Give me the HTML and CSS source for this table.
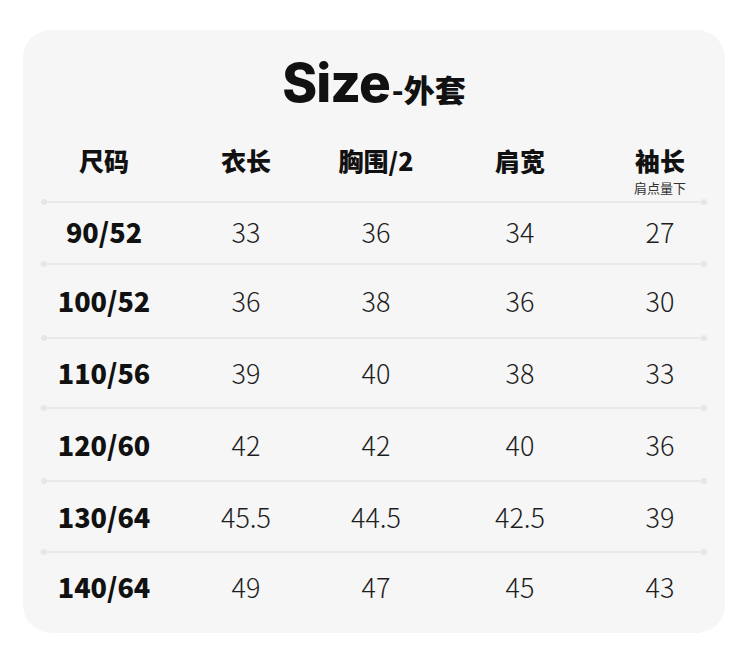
FILE: index.html
```html
<!DOCTYPE html>
<html lang="zh">
<head>
<meta charset="utf-8">
<link rel="stylesheet" href="styles.css">
</head>
<body>
<div class="card">
  <h1 class="title"><span class="title-en">Size</span><span class="title-zh">-外套</span></h1>
  <div class="grid head">
    <div class="cell">尺码</div>
    <div class="cell">衣长</div>
    <div class="cell">胸围/2</div>
    <div class="cell">肩宽</div>
    <div class="cell">袖长<span class="sub">肩点量下</span></div>
  </div>
  <div class="rule"></div>
  <div class="grid row r1"><div class="cell size">90/52</div><div class="cell">33</div><div class="cell">36</div><div class="cell">34</div><div class="cell">27</div></div>
  <div class="rule"></div>
  <div class="grid row r2"><div class="cell size">100/52</div><div class="cell">36</div><div class="cell">38</div><div class="cell">36</div><div class="cell">30</div></div>
  <div class="rule"></div>
  <div class="grid row r3"><div class="cell size">110/56</div><div class="cell">39</div><div class="cell">40</div><div class="cell">38</div><div class="cell">33</div></div>
  <div class="rule"></div>
  <div class="grid row r4"><div class="cell size">120/60</div><div class="cell">42</div><div class="cell">42</div><div class="cell">40</div><div class="cell">36</div></div>
  <div class="rule"></div>
  <div class="grid row r5"><div class="cell size">130/64</div><div class="cell">45.5</div><div class="cell">44.5</div><div class="cell">42.5</div><div class="cell">39</div></div>
  <div class="rule"></div>
  <div class="grid row r6"><div class="cell size">140/64</div><div class="cell">49</div><div class="cell">47</div><div class="cell">45</div><div class="cell">43</div></div>
</div>
</body>
</html>
```
FILE: styles.css
```css
html, body {
  margin: 0;
  padding: 0;
  background: #ffffff;
}
body {
  padding: 30px 0 0 23px;
  font-family: "Noto Sans CJK SC", "Noto Sans", sans-serif;
  color: #1a1a1a;
}
.card {
  width: 702px;
  height: 603px;
  background: #f6f6f6;
  border-radius: 28px;
  box-sizing: border-box;
  padding-top: 25px;
}
.title {
  margin: 0;
  height: 56px;
  line-height: 56px;
  text-align: center;
  font-weight: 800;
  color: #111;
  white-space: nowrap;
}
.title-en {
  font-family: "Inter", "Open Sans", sans-serif;
  font-size: 53px;
  letter-spacing: -1px;
}
.title-zh {
  font-family: "Noto Sans CJK SC", sans-serif;
  font-size: 31px;
  font-weight: 900;
  margin-left: 2px;
}
.grid {
  display: grid;
  grid-template-columns: 162px 122px 138px 150px 130px;
  align-items: center;
}
.cell {
  text-align: center;
  white-space: nowrap;
}
.head {
  margin-top: 34px;
  height: 56px;
  align-items: start;
  font-size: 25px;
  font-weight: 900;
  line-height: 30px;
  color: #111;
}
.sub {
  display: block;
  margin-top: 5px;
  font-size: 13px;
  line-height: 16px;
  font-weight: 400;
  color: #333;
}
.rule {
  position: relative;
  height: 2px;
  margin: 0 19px;
  background: #e9e9e9;
}
.rule::before,
.rule::after {
  content: "";
  position: absolute;
  top: -2px;
  width: 6px;
  height: 6px;
  border-radius: 50%;
  background: #e6e6e6;
}
.rule::before { left: -1px; }
.rule::after { right: -1px; }
.row {
  font-size: 27px;
  font-weight: 300;
  line-height: 32px;
  color: #1e1e1e;
}
.row .size {
  font-weight: 900;
  color: #111;
}
.r1 { height: 58px; padding-bottom: 2px; }
.r2 { height: 72px; }
.r3 { height: 68px; }
.r4 { height: 71px; }
.r5 { height: 69px; }
.r6 { height: 68px; }
```
